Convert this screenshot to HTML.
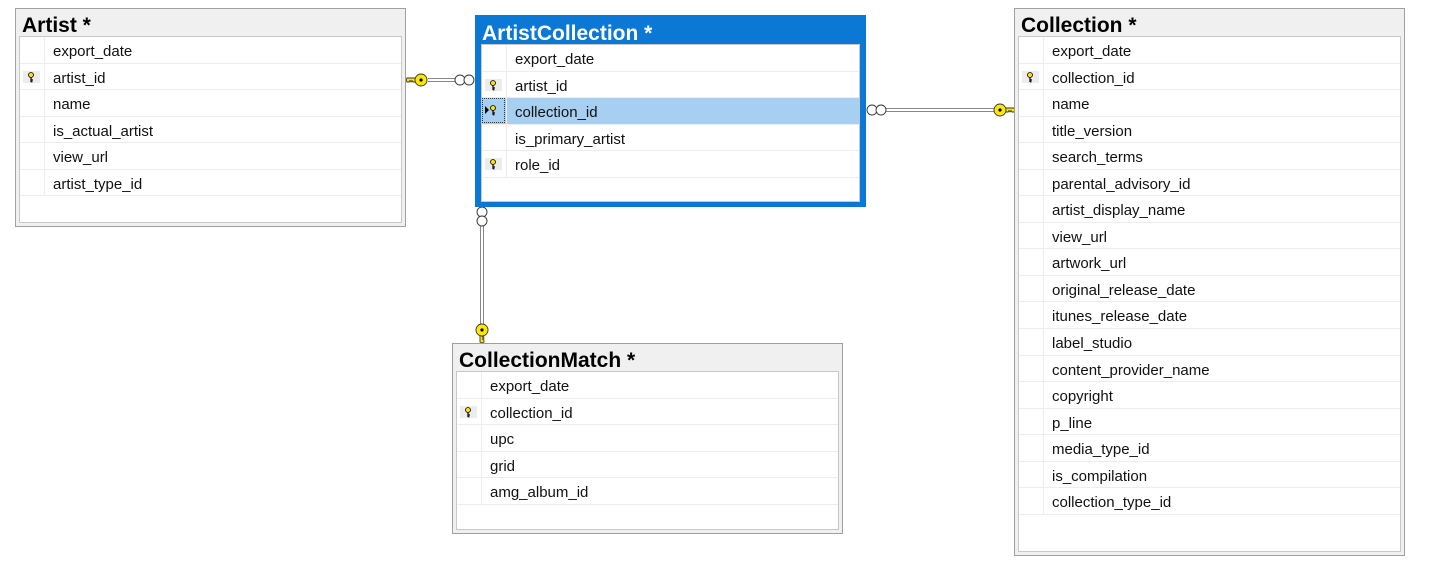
<!DOCTYPE html>
<html><head><meta charset="utf-8"><style>
body{margin:0;width:1432px;height:577px;background:#fff;position:relative;overflow:hidden;font-family:"Liberation Sans",sans-serif;}
.t{position:absolute;background:#f0f0f0;border:1px solid #a0a0a0;box-sizing:border-box;}
.t .h{position:absolute;left:6px;top:5px;font-weight:bold;font-size:21px;color:#000;line-height:24px;}
.t .in{position:absolute;left:3px;top:27px;right:3px;bottom:3px;background:#fff;border:1px solid #c8c8c8;box-sizing:border-box;}
.r{height:26.55px;border-bottom:1px solid #ededed;box-sizing:border-box;position:relative;font-size:15px;line-height:29px;color:#111;}
.r span{position:absolute;left:33px;top:0}
.r:before{content:"";position:absolute;left:24px;top:0;bottom:0;width:1px;background:#ededed;}
.k{position:absolute;left:3px;top:7px;width:17px;height:12px;background:#ececec;}
.k svg{position:absolute;left:5px;top:1px}
.ac{border:3px solid #0a78d4;background:#0a78d4;}
.ac .h{color:#fff;left:4px;top:4px}
.ac .in{left:3px;top:26px;right:3px;bottom:2px}
.sel{background:#a6cff1}
.sel .k{background:none;border:1px dotted #333;left:0;top:0;width:23px;height:25px;box-sizing:border-box}
</style></head><body>
<svg width="0" height="0" style="position:absolute"><defs>
<g id="key"><circle cx="3" cy="3" r="2.5" fill="#ffe000" stroke="#000" stroke-width="0.8"/><path d="M3 5.5V10M3 8h2M3 9.8h1.5" stroke="#000" stroke-width="1.2" fill="none"/></g>
</defs></svg>

<svg width="1432" height="577" style="position:absolute;left:0;top:0">
<g stroke="#888" stroke-width="1" fill="none">
<path d="M428 78.5H455M428 81.5H455"/>
<path d="M885 108.5H994M885 111.5H994"/>
<path d="M480.5 226V324M483.5 226V324"/>
</g>
<g fill="#fff" stroke="#333" stroke-width="0.9">
<circle cx="460" cy="80" r="5"/><circle cx="469" cy="80" r="5"/>
<circle cx="872" cy="110" r="5"/><circle cx="881" cy="110" r="5"/>
<circle cx="482" cy="212" r="5"/><circle cx="482" cy="221" r="5"/>
</g>
<g fill="#ffe800" stroke="#333" stroke-width="0.9">
<path d="M416 78H407l-1 2 1 2h2l1-1.5 1 1.5 1-1.5 1 1.5h3z"/><circle cx="421" cy="80" r="6"/>
<path d="M1005 108H1014l1 2-1 2h-2l-1-1.5-1 1.5-1-1.5-1 1.5h-3z"/><circle cx="1000" cy="110" r="6"/>
<path d="M480 335V342l2 1 2-1v-2l-1.5-1 1.5-1-1.5-1 1.5-1v-1z"/><circle cx="482" cy="330" r="6"/>
</g>
<g fill="#000"><circle cx="421" cy="80" r="1.6"/><circle cx="1000" cy="110" r="1.6"/><circle cx="482" cy="330" r="1.6"/></g>
</svg>

<div class="t" style="left:15px;top:8px;width:391px;height:219px">
<div class="h">Artist *</div>
<div class="in">
<div class="r"><span>export_date</span></div>
<div class="r"><div class="k"><svg width="8" height="11"><use href="#key"/></svg></div><span>artist_id</span></div>
<div class="r"><span>name</span></div>
<div class="r"><span>is_actual_artist</span></div>
<div class="r"><span>view_url</span></div>
<div class="r"><span>artist_type_id</span></div>
</div></div>

<div class="t ac" style="left:475px;top:15px;width:391px;height:192px">
<div class="h">ArtistCollection *</div>
<div class="in">
<div class="r"><span>export_date</span></div>
<div class="r"><div class="k"><svg width="8" height="11"><use href="#key"/></svg></div><span>artist_id</span></div>
<div class="r sel"><div class="k"><svg width="14" height="11" style="left:2px;top:6px"><path d="M0 1L4 5 0 9Z" fill="#000"/><g transform="translate(5,0)"><use href="#key"/></g></svg></div><span>collection_id</span></div>
<div class="r"><span>is_primary_artist</span></div>
<div class="r"><div class="k"><svg width="8" height="11"><use href="#key"/></svg></div><span>role_id</span></div>
</div></div>

<div class="t" style="left:1014px;top:8px;width:391px;height:548px">
<div class="h">Collection *</div>
<div class="in">
<div class="r"><span>export_date</span></div>
<div class="r"><div class="k"><svg width="8" height="11"><use href="#key"/></svg></div><span>collection_id</span></div>
<div class="r"><span>name</span></div>
<div class="r"><span>title_version</span></div>
<div class="r"><span>search_terms</span></div>
<div class="r"><span>parental_advisory_id</span></div>
<div class="r"><span>artist_display_name</span></div>
<div class="r"><span>view_url</span></div>
<div class="r"><span>artwork_url</span></div>
<div class="r"><span>original_release_date</span></div>
<div class="r"><span>itunes_release_date</span></div>
<div class="r"><span>label_studio</span></div>
<div class="r"><span>content_provider_name</span></div>
<div class="r"><span>copyright</span></div>
<div class="r"><span>p_line</span></div>
<div class="r"><span>media_type_id</span></div>
<div class="r"><span>is_compilation</span></div>
<div class="r"><span>collection_type_id</span></div>
</div></div>

<div class="t" style="left:452px;top:343px;width:391px;height:191px">
<div class="h">CollectionMatch *</div>
<div class="in">
<div class="r"><span>export_date</span></div>
<div class="r"><div class="k"><svg width="8" height="11"><use href="#key"/></svg></div><span>collection_id</span></div>
<div class="r"><span>upc</span></div>
<div class="r"><span>grid</span></div>
<div class="r"><span>amg_album_id</span></div>
</div></div>
</body></html>
